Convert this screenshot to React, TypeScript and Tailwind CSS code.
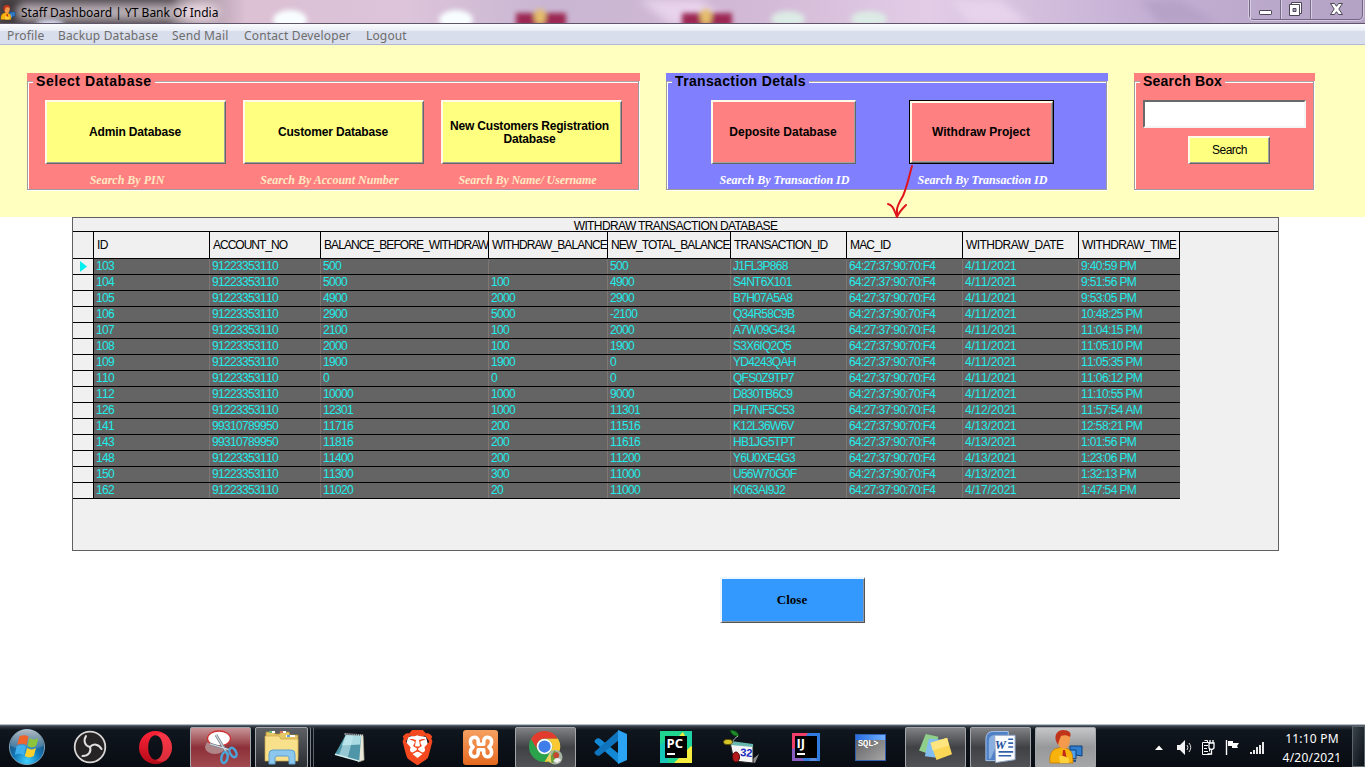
import type { ReactNode } from "react";
import { SiBrave } from "react-icons/si";

const menuItems = [
  { label: "Profile", cls: "w-[51px]" },
  { label: "Backup Database", cls: "w-[114px]" },
  { label: "Send Mail", cls: "w-[72px]" },
  { label: "Contact Developer", cls: "w-[122px]" },
  { label: "Logout", cls: "w-[60px]" },
];

const columns = [
  { name: "ID", head: "tracking-[-0.5px]", cell: "tracking-[-0.67px]" },
  { name: "ACCOUNT_NO", head: "tracking-[-1px]", cell: "tracking-[-0.67px]" },
  { name: "BALANCE_BEFORE_WITHDRAW", head: "tracking-[-0.93px]", cell: "tracking-[-0.67px]" },
  { name: "WITHDRAW_BALANCE", head: "tracking-[-0.92px]", cell: "tracking-[-0.67px]" },
  { name: "NEW_TOTAL_BALANCE", head: "tracking-[-0.96px]", cell: "tracking-[-0.67px]" },
  { name: "TRANSACTION_ID", head: "tracking-[-0.8px]", cell: "tracking-[-0.75px]" },
  { name: "MAC_ID", head: "tracking-[-0.85px]", cell: "tracking-[-0.65px]" },
  { name: "WITHDRAW_DATE", head: "tracking-[-0.55px]", cell: "tracking-[-0.2px]" },
  { name: "WITHDRAW_TIME", head: "tracking-[-0.62px]", cell: "tracking-[-0.62px]" },
];

const MAC = "64:27:37:90:70:F4";
const rows: string[][] = [
  ["103", "91223353110", "500", "", "500", "J1FL3P868", MAC, "4/11/2021", "9:40:59 PM"],
  ["104", "91223353110", "5000", "100", "4900", "S4NT6X101", MAC, "4/11/2021", "9:51:56 PM"],
  ["105", "91223353110", "4900", "2000", "2900", "B7H07A5A8", MAC, "4/11/2021", "9:53:05 PM"],
  ["106", "91223353110", "2900", "5000", "-2100", "Q34R58C9B", MAC, "4/11/2021", "10:48:25 PM"],
  ["107", "91223353110", "2100", "100", "2000", "A7W09G434", MAC, "4/11/2021", "11:04:15 PM"],
  ["108", "91223353110", "2000", "100", "1900", "S3X6IQ2Q5", MAC, "4/11/2021", "11:05:10 PM"],
  ["109", "91223353110", "1900", "1900", "0", "YD4243QAH", MAC, "4/11/2021", "11:05:35 PM"],
  ["110", "91223353110", "0", "0", "0", "QFS0Z9TP7", MAC, "4/11/2021", "11:06:12 PM"],
  ["112", "91223353110", "10000", "1000", "9000", "D830TB6C9", MAC, "4/11/2021", "11:10:55 PM"],
  ["126", "91223353110", "12301", "1000", "11301", "PH7NF5C53", MAC, "4/12/2021", "11:57:54 AM"],
  ["141", "99310789950", "11716", "200", "11516", "K12L36W6V", MAC, "4/13/2021", "12:58:21 PM"],
  ["143", "99310789950", "11816", "200", "11616", "HB1JG5TPT", MAC, "4/13/2021", "1:01:56 PM"],
  ["148", "91223353110", "11400", "200", "11200", "Y6U0XE4G3", MAC, "4/13/2021", "1:23:06 PM"],
  ["150", "91223353110", "11300", "300", "11000", "U56W70G0F", MAC, "4/13/2021", "1:32:13 PM"],
  ["162", "91223353110", "11020", "20", "11000", "K063AI9J2", MAC, "4/17/2021", "1:47:54 PM"],
];

const gridCols = "grid grid-cols-[21px_116px_111px_168px_119px_123px_116px_116px_116px_101px]";

function StaffIcon({ className }: { className: string }) {
  return (
    <svg viewBox="0 0 36 34" className={className}>
      <path d="M22 16h12v10l-12-2z" fill="#2f7fd0" stroke="#123e78" />
      <path d="M17 20h11v9l-11-2z" fill="#4aa0ee" stroke="#123e78" />
      <path d="M20 30l8 1" stroke="#1c4f8c" strokeWidth="2" />
      <path d="M2 33c-1-9 2-14 8-15l5-1 5 2c4 2 5 6 5 14z" fill="#f7b20b" stroke="#c77a05" strokeWidth=".8" />
      <path d="M15 20l2 0 2 10-3 3-2-3z" fill="#c3261b" />
      <path d="M9 9c0-5 3-8 7-8s7 3 6 8c0 6-3 10-6 10s-7-4-7-10z" fill="#f39a4c" />
      <path d="M8 11C6 4 10 0 15 0c6 0 9 3 7 7-3-2-6-2-9-1-1 3-2 4-3 9z" fill="#c0351a" />
      <path d="M11 26c4-1 6 1 10 2v5h-9z" fill="#ffd23c" />
    </svg>
  );
}

function TitleBar() {
  return (
    <header className="relative h-6 overflow-hidden border-b border-[#5f5669] bg-[#cbb8d6]">
      <svg viewBox="0 0 1365 24" preserveAspectRatio="none" className="absolute inset-0 h-6 w-full">
        <defs>
          <linearGradient id="aero" x1="0" x2="1">
            <stop offset="0" stopColor="#8d8489" />
            <stop offset=".13" stopColor="#8f858c" />
            <stop offset=".18" stopColor="#dcc0d4" />
            <stop offset=".3" stopColor="#dcc4da" />
            <stop offset=".4" stopColor="#c9b6d2" />
            <stop offset=".55" stopColor="#d2b9d5" />
            <stop offset=".68" stopColor="#e2cce6" />
            <stop offset=".84" stopColor="#c4b0d4" />
            <stop offset="1" stopColor="#b3a2c4" />
          </linearGradient>
          <filter id="soft" x="-30%" y="-60%" width="160%" height="220%"><feGaussianBlur stdDeviation="2.4" /></filter>
          <filter id="wide" x="-10%" y="-60%" width="120%" height="220%"><feGaussianBlur stdDeviation="4" /></filter>
        </defs>
        <rect width="1365" height="24" fill="url(#aero)" />
        <g filter="url(#wide)">
          <path d="M-5-5h182l-4 34H-5z" fill="#3f3a3d" />
          <rect x="18" y="5" width="200" height="14" rx="7" fill="#b9afb6" />
          <ellipse cx="198" cy="12" rx="22" ry="10" fill="#e5d3de" />
          <path d="M640 0l60 0 30 24h-60zM950 0h50l30 24h-60z" fill="#e8d3ec" />
          <path d="M1140 0h40l40 24h-60z" fill="#b5a2c6" />
        </g>
        <g filter="url(#soft)">
          <ellipse cx="290" cy="20" rx="17" ry="10" fill="#f8feff" />
          <ellipse cx="456" cy="20" rx="17" ry="10" fill="#f8feff" />
          <ellipse cx="50" cy="24" rx="14" ry="4" fill="#e2e8ff" />
          <rect x="516" y="13" width="50" height="14" fill="#9c2853" />
          <rect x="682" y="13" width="50" height="14" fill="#9c2853" />
          <ellipse cx="540" cy="17" rx="6" ry="8" fill="#e5bd6c" />
          <ellipse cx="706" cy="17" rx="6" ry="8" fill="#e5bd6c" />
          <ellipse cx="788" cy="19" rx="17" ry="8" fill="#dcebe5" />
          <ellipse cx="869" cy="19" rx="18" ry="8" fill="#dcebe5" />
        </g>
        <g fill="none">
          <path d="M1249.500-1V15q0 4.500 4.500 4.500h104q4.500 0 4.500-4.500V-1" stroke="#716684" />
          <path d="M1248.500-1V15.500q0 5 5 5h105q5 0 5-5V-1" stroke="#ddd2e6" strokeOpacity=".8" />
          <path d="M1280.500 0v19M1310.500 0v19" stroke="#776c8a" />
          <path d="M1281.500 0v19M1311.500 0v19M1250.500 0v19" stroke="#d9cde4" />
        </g>
        <rect x="1259.500" y="10.500" width="12" height="4" rx=".6" fill="#fff" stroke="#4b4658" />
        <path d="M1291.500 2.500h10v11h-10z" fill="#fff" stroke="#4b4658" />
        <path d="M1289.500 4.500h10v11h-10z" fill="#fff" stroke="#4b4658" />
        <path d="M1293 8.500h3v3h-3z" fill="#b3a2c4" stroke="#4b4658" />
        <path d="M1330.500 3.500h4l2 2.800 2-2.800h4l-3.700 5.500 3.700 5.500h-4l-2-2.800-2 2.800h-4l3.700-5.500z" fill="#fff" stroke="#4b4658" />
      </svg>
      <div className="relative flex h-6 items-center">
        <StaffIcon className="h-[15px] w-[16px]" />
        <h1 className="ml-[5px] pt-px font-['Noto_Sans',sans-serif] text-[12px] leading-6 whitespace-nowrap text-black">Staff Dashboard | YT Bank Of India</h1>
      </div>
    </header>
  );
}

function GroupBox({ title, titleClass, color, width, children }: { title: string; titleClass: string; color: string; width: string; children: ReactNode }) {
  return (
    <section className={`${width} shrink-0`}>
      <div className={`h-2 ${color}`} />
      <div className={`mr-px h-[109px] border-r border-b border-l border-[#a09a9a] shadow-[inset_1px_0_0_#fff,0_1px_0_#fff,1px_0_0_#fff] ${color}`}>
        <div className="flex h-[2px] items-start">
          <span className="h-[2px] w-[5px] border-b border-white bg-[#b0a5a5]" />
          <h2 className={`-mt-2 px-[3px] font-['Liberation_Sans',sans-serif] text-[14px] leading-4 font-bold whitespace-nowrap text-black ${titleClass}`}>{title}</h2>
          <span className="h-[2px] flex-1 border-b border-white bg-[#b0a5a5]" />
        </div>
        {children}
      </div>
    </section>
  );
}

function BevelButton({ children, size, color, className = "" }: { children: ReactNode; size: string; color: string; className?: string }) {
  return (
    <button className={`flex shrink-0 items-center justify-center border-t-2 border-l-2 border-r border-b border-t-[#fffbe8] border-l-[#fffbe8] border-r-[#666] border-b-[#666] text-center font-['Liberation_Sans',sans-serif] text-[12px] leading-[13px] text-black shadow-[inset_-1px_-1px_0_#a0a0a0] ${size} ${color} ${className}`}>
      {children}
    </button>
  );
}

function Hint({ children, className }: { children: ReactNode; className: string }) {
  return <p className={`pt-2 text-center font-['Liberation_Serif',serif] text-[12px] leading-4 font-bold italic whitespace-nowrap ${className}`}>{children}</p>;
}

function TransactionGrid() {
  return (
    <div className="ml-[72px] h-[334px] w-[1207px] border border-[#606060] bg-[#f0f0f0] font-['Liberation_Sans',sans-serif] text-[12px]">
      <div className="h-[14px] border-b border-black text-center leading-[16px] tracking-[-0.62px] text-black">WITHDRAW TRANSACTION DATABASE</div>
      <div className={`${gridCols} h-[27px] w-[1107px] border-b border-black`}>
        <span className="border-r border-black" />
        {columns.map((c) => (
          <span key={c.name} className={`overflow-hidden border-r border-black pl-[3px] leading-[26px] whitespace-nowrap text-black ${c.head}`}>{c.name}</span>
        ))}
      </div>
      {rows.map((row, i) => (
        <div key={row[0]} className={`${gridCols} h-4 w-[1107px] border-b border-black bg-[#646464] text-[#1eeeea] [font-kerning:none]`}>
          <span className="flex items-center border-r border-black bg-[#f0f0f0] pl-[7px]">
            {i === 0 && <svg viewBox="0 0 7 11" className="h-[11px] w-[7px]"><path d="M0 0l7 5.500-7 5.500z" fill="#00f0f0" /></svg>}
          </span>
          {row.map((cell, j) => (
            <span key={j} className={`overflow-hidden border-r border-[#7d7672] pl-[2px] leading-[15px] whitespace-nowrap last:border-[#646464] ${columns[j].cell}`}>{cell}</span>
          ))}
        </div>
      ))}
    </div>
  );
}

function StartOrb() {
  return (
    <svg viewBox="0 0 40 40" className="h-[38px] w-[38px]">
      <defs>
        <radialGradient id="orb" cx=".5" cy=".9" r=".85"><stop offset="0" stopColor="#3fd0ff" /><stop offset=".45" stopColor="#1377b8" /><stop offset="1" stopColor="#24415c" /></radialGradient>
        <linearGradient id="orbShine" x2="0" y2="1"><stop offset="0" stopColor="#fff" stopOpacity=".65" /><stop offset="1" stopColor="#fff" stopOpacity=".1" /></linearGradient>
      </defs>
      <circle cx="20" cy="20" r="18.500" fill="url(#orb)" stroke="#7fa5bd" />
      <path d="M2.500 19a17.500 17.500 0 0 1 35 0c-10 5-25 5-35 0z" fill="url(#orbShine)" />
      <path d="M12 9c3.500-2 6.500-2 9.500 0l-2 9c-3.500-2-6.500-2-10 0z" fill="#f0642c" />
      <path d="M22.500 10.500c3.500 2 6.500 2 9.500 0l-2.300 8.500c-3.400 2-6.200 2-9.200 0z" fill="#8cc53c" />
      <path d="M9 19.500c3.500-2 6.500-2 10 0l-2.300 9c-3.500-2-6.500-2-9.500 0z" fill="#3fb0ee" />
      <path d="M20 21c3.500 2 6.500 2 9.500 0l-2.300 8.500c-3.400 2-6.500 2-9.500 0z" fill="#fdd02e" />
    </svg>
  );
}

function ObsIcon() {
  return (
    <svg viewBox="0 0 34 34" className="mr-px h-[34px] w-[34px]">
      <circle cx="17" cy="17" r="15.300" fill="#262324" stroke="#d9d6d6" strokeWidth="1.800" />
      <g fill="none" stroke="#e2dfdf" strokeWidth="2" strokeLinecap="round">
        <path d="M13 6c-3 5-1 10 4 11" />
        <path d="M13 6c-3 5-1 10 4 11" transform="rotate(120 17 17)" />
        <path d="M13 6c-3 5-1 10 4 11" transform="rotate(240 17 17)" />
      </g>
    </svg>
  );
}

function OperaIcon() {
  return (
    <svg viewBox="0 0 36 36" className="h-[35px] w-[35px]">
      <defs><linearGradient id="opera" x2="0" y2="1"><stop offset="0" stopColor="#ff2438" /><stop offset="1" stopColor="#b40a18" /></linearGradient></defs>
      <path fillRule="evenodd" d="M18 1a17 17 0 1 0 0 34 17 17 0 0 0 0-34zm0 4.500c4.500 0 7.500 5.600 7.500 12.500S22.500 30.500 18 30.500 10.500 24.900 10.500 18 13.500 5.500 18 5.500z" fill="url(#opera)" />
      <path d="M18 5.500C21 3.500 25 3 29 5c8 7 8 19 0 26-4 2-8 1.500-11-.5 4.500 0 7.500-5.600 7.500-12.500S22.500 5.500 18 5.500z" fill="#ff5560" opacity=".45" />
    </svg>
  );
}

function SnipIcon() {
  return (
    <svg viewBox="0 0 38 36" className="h-[36px] w-[38px]">
      <ellipse cx="13" cy="18" rx="10" ry="7" fill="#b79a9a" opacity=".8" />
      <ellipse cx="17" cy="9.500" rx="11.500" ry="7.500" fill="#fff" stroke="#cf3030" strokeWidth="1.300" />
      <path d="M14 6L26 26M8 15l20 6" stroke="#7d8792" strokeWidth="2.800" />
      <path d="M14 6L26 26M8 15l20 6" stroke="#d3dae0" strokeWidth="1.200" />
      <ellipse cx="22.500" cy="28.500" rx="3" ry="5.500" transform="rotate(12 22.500 28.500)" fill="none" stroke="#4aa5d8" strokeWidth="2.500" />
      <ellipse cx="31" cy="23.500" rx="3" ry="5" transform="rotate(-28 31 23.500)" fill="none" stroke="#4aa5d8" strokeWidth="2.500" />
    </svg>
  );
}

function FolderIcon() {
  return (
    <svg viewBox="0 0 38 36" className="h-[36px] w-[38px]">
      <path d="M3 8V3h9v2h5V3h9l1 3h8v22H3z" fill="#e6c765" stroke="#b58f35" strokeWidth=".7" />
      <path d="M6 3h6M17 3h6M23 7h9" stroke="#fff" strokeWidth="2" />
      <path d="M24 7h3" stroke="#2f7fd0" strokeWidth="1.500" /><path d="M17 3h3" stroke="#c4402e" strokeWidth="1.500" /><path d="M6 3h3" stroke="#3a9e4a" strokeWidth="1.500" />
      <path d="M2 7h14l2 3h17v22H2z" fill="#f9e08a" stroke="#c9a548" strokeWidth=".7" />
      <path d="M6 35V25q0-4 4-4h18q4 0 4 4v10h-6v-6q0-2-2-2H14q-2 0-2 2v6z" fill="#8cc8ee" stroke="#5e9fce" />
    </svg>
  );
}

function NotepadIcon() {
  return (
    <svg viewBox="0 0 36 34" className="h-[33px] w-[35px]">
      <path d="M28 4l3 1 1 25-6 2z" fill="#e9e7d8" stroke="#aaa894" strokeWidth=".7" />
      <path d="M13 4l16 1-2 26L2 24z" fill="#4f97a8" />
      <path d="M13 4l16 1-1 9-19 1z" fill="#a9dbe2" /><path d="M14 4l7 1-6 23-9-3z" fill="#c4eaee" opacity=".6" />
      <path d="M2 24l25 7" stroke="#d7f1f3" strokeWidth="1.500" />
      <path d="M12 3l19 1.500" stroke="#d8d8d8" strokeWidth="2" strokeDasharray="1 1" />
    </svg>
  );
}

function BraveIcon() {
  return (
    <span className="grid h-[36px] w-[32px] place-items-center">
      <svg viewBox="0 0 32 36" className="col-start-1 row-start-1 h-[36px] w-[32px]"><path d="M7 8l9-2 9 2 2 8-4 10-7 6-7-6-4-10z" fill="#fff" /></svg>
      <SiBrave className="col-start-1 row-start-1 h-[35px] w-[35px] text-[#f4491f]" />
    </span>
  );
}

function XamppIcon() {
  return (
    <span className="grid h-[35px] w-[35px] place-items-center rounded-[3px] bg-gradient-to-b from-[#f5a060] to-[#e5691c]">
      <svg viewBox="0 0 30 26" className="h-[24px] w-[28px]" fill="none" stroke="#fff" strokeWidth="3.800" strokeLinejoin="round">
        <path d="M12 10V6.500C12 1 3.500 1 3.500 7c0 3 1 4.500 3 6-2 1.500-3 3-3 6 0 6 8.500 6 8.500.5V16h6v3.500c0 5.500 8.500 5.500 8.500-.5 0-3-1-4.500-3-6 2-1.500 3-3 3-6 0-6-8.500-6-8.500-.5V10z" />
      </svg>
    </span>
  );
}

function ChromeIcon() {
  return (
    <svg viewBox="0 0 36 36" className="h-[35px] w-[35px]">
      <circle cx="17" cy="17" r="16" fill="#2ba24c" />
      <path d="M3.100 9A16 16 0 0 1 30.900 9L17 9a8 8 0 0 0-7 12z" fill="#e33b2e" />
      <path d="M30.900 9A16 16 0 0 1 17 33l7-12a8 8 0 0 0-7-12z" fill="#fcc934" />
      <circle cx="17" cy="17" r="8" fill="#fff" /><circle cx="17" cy="17" r="6.300" fill="#3f7de8" />
      <circle cx="28" cy="28" r="7.500" fill="#a8b4a4" /><path d="M20 33l7-12 4 3-5 10z" fill="#6aa13c" />
      <circle cx="29" cy="26" r="3" fill="#c4472f" /><path d="M19 31l4-8 1 11z" fill="#e9d65a" /><path d="M26 32c2-4 6-4 8-1l-4 3z" fill="#eee" />
    </svg>
  );
}

function CodeIcon() {
  return (
    <svg viewBox="0 0 36 36" className="h-[36px] w-[36px]">
      <path d="M26 35L2 13.500q-1-1.500 0-2.500l2-1.500q1.500-.8 3 .3L26 25z" fill="#1389d6" />
      <path d="M26 1L2 22.500q-1 1.500 0 2.500l2 1.500q1.500.8 3-.3L26 11z" fill="#0f74bd" />
      <path d="M25 1l9 4v26l-9 4z" fill="#2aa4f2" />
    </svg>
  );
}

function LetterIcon({ text, frame }: { text: string; frame: ReactNode }) {
  return (
    <span className="grid place-items-center">
      <span className="col-start-1 row-start-1 flex">{frame}</span>
      <span className="col-start-1 row-start-1 flex h-[22px] w-[22px] flex-col items-start bg-black pl-[2px] font-['Open_Sans',sans-serif] text-[13px] leading-[14px] font-bold text-white">
        {text}
        <span className="mt-[3px] h-[2px] w-[8px] bg-white" />
      </span>
    </span>
  );
}

function CalendarBugIcon() {
  return (
    <svg viewBox="0 0 36 36" className="h-[36px] w-[36px]">
      <path d="M26 33l10-8-4 9z" fill="#8b8b8b" />
      <path d="M7 13l23 3v18l-19-2z" fill="#f5f5f5" stroke="#222" />
      <path d="M8 12l22 3v3L8 16z" fill="#68b7ae" />
      <path d="M7 1c5 0 8 2 9 6-5 1-8-2-9-6z" fill="#1e8b2b" stroke="#0b3d10" />
      <path d="M15 7c-3 2-6 5-6 8" fill="none" stroke="#bcbcbc" />
      <ellipse cx="5" cy="13" rx="4.500" ry="2.600" fill="#d5c526" stroke="#5a5207" />
      <ellipse cx="13" cy="28" rx="3.500" ry="5" fill="#b51a1a" stroke="#510808" />
      <text x="17" y="27" fill="#1b2bc2" fontSize="11" fontWeight="700" fontFamily="Liberation Sans" transform="rotate(4 17 27)">32</text>
    </svg>
  );
}

function SqlIcon() {
  return (
    <span className="flex h-[27px] w-[31px] flex-col border border-[#315fae] bg-gradient-to-br from-[#5c5c60] to-[#a7a7a7]">
      <span className="h-[5px] bg-gradient-to-r from-[#2a6ce0] to-[#6fb0ff]" />
      <span className="pl-[2px] font-['Liberation_Mono',monospace] text-[8.5px] leading-[9px] text-white [text-shadow:0_0_0.5px_#fff]">SQL&gt;</span>
    </span>
  );
}

function StickyIcon() {
  return (
    <svg viewBox="0 0 36 32" className="h-[31px] w-[35px]">
      <path d="M8 2l13 3-6 19L1 19z" fill="#90cf8b" />
      <path d="M11 7l16 1-4 19-16-2z" fill="#82bdf0" />
      <path d="M13 11l17-5 5 17-16 6z" fill="#fbd757" />
      <path d="M13 11l17-5 2 8-17 5z" fill="#ffe88a" opacity=".8" />
    </svg>
  );
}

function WordIcon() {
  return (
    <svg viewBox="0 0 36 34" className="h-[34px] w-[35px]">
      <path d="M3 31V9q0-8 8-8h15v30z" fill="#4f80c6" stroke="#a8c5ee" />
      <path d="M6 29V11q0-6 6-6h6L8 29z" fill="#89afe0" />
      <path d="M12 5h21v25l-20 3z" fill="#f9fbff" stroke="#94a8c8" />
      <text x="12" y="19" fill="#234f9b" fontSize="13" fontWeight="700" fontFamily="Liberation Serif" fontStyle="italic">W</text>
      <path d="M26 9h5M26 13h5M26 17h5M16 22h15M16 26h13" stroke="#315fa8" strokeWidth="1.700" />
    </svg>
  );
}

const pycharmFrame = (
  <svg viewBox="0 0 32 32" className="h-[32px] w-[32px]"><path d="M0 0h32v32H0z" fill="#1fd590" /><path d="M14 32L32 14v18zM18 6l5-5 4 8z" fill="#f5ee3e" /><path d="M0 14l8-6v24H0z" fill="#16c6b8" /><path d="M24 0h8v16l-6-8z" fill="#1fd3a6" /></svg>
);
const ideaFrame = (
  <svg viewBox="0 0 28 28" className="h-[28px] w-[28px]"><path d="M0 0h28v28H0z" fill="#2f7be0" /><path d="M0 0h16L4 18 0 16z" fill="#f0406a" /><path d="M0 16l5-2 7 14H0z" fill="#8a5cc0" /><path d="M17 28l5-8 3 8z" fill="#5a8ae0" /></svg>
);

const plainSlot = "flex h-full w-[65px] shrink-0 items-center justify-center pt-px";
const buttonBase = "flex h-[41px] w-[61px] items-center justify-center rounded-[2px] border border-[#a2a6aa] bg-gradient-to-b";

function Slot({ children, tone }: { children: ReactNode; tone?: string }) {
  return <div className={plainSlot}>{tone ? <div className={`${buttonBase} ${tone}`}>{children}</div> : children}</div>;
}

const grayTone = "from-[#808285] via-[#3f4144] to-[#515356]";

function Taskbar() {
  return (
    <footer className="flex h-[42px] border-t border-[#55606b] bg-[#0b1017] bg-gradient-to-b from-[#39414a] from-0% via-[#10161e] via-10% to-[#080c12] to-100% shadow-[0_-1px_0_#b4bcc4]">
      <div className="flex w-[58px] shrink-0 items-center pl-2"><StartOrb /></div>
      <Slot><ObsIcon /></Slot>
      <Slot><OperaIcon /></Slot>
      <Slot tone="from-[#c79599] via-[#8d3039] to-[#a24a50]"><SnipIcon /></Slot>
      <div className="flex h-full w-[65px] shrink-0 items-center pt-px pl-[2px]">
        <div className="flex h-[41px] w-[53px] items-center justify-center rounded-[2px] border border-[#a2a6aa] bg-gradient-to-b from-[#5d6166] to-[#2a2e33]"><FolderIcon /></div>
        <span className="h-[41px] w-[3px] rounded-r-[2px] border-r border-[#7c8288]" />
        <span className="h-[41px] w-[3px] rounded-r-[2px] border-r border-[#5c6268]" />
      </div>
      <Slot><NotepadIcon /></Slot>
      <Slot><BraveIcon /></Slot>
      <Slot><XamppIcon /></Slot>
      <Slot tone={grayTone}><ChromeIcon /></Slot>
      <Slot><CodeIcon /></Slot>
      <Slot><LetterIcon text="PC" frame={pycharmFrame} /></Slot>
      <Slot><CalendarBugIcon /></Slot>
      <Slot><LetterIcon text="IJ" frame={ideaFrame} /></Slot>
      <Slot><SqlIcon /></Slot>
      <Slot tone={grayTone}><StickyIcon /></Slot>
      <Slot tone={grayTone}><WordIcon /></Slot>
      <Slot tone="from-[#c5c6c8] via-[#96989a] to-[#a5a7a9]"><StaffIcon className="h-[34px] w-[36px]" /></Slot>
      <svg viewBox="0 0 112 20" className="mt-[11px] ml-[55px] h-[20px] w-[112px] shrink-0">
        <path d="M2 13l4-4.500 4 4.500z" fill="#fff" />
        <path d="M24 8h3l5-5v15l-5-5h-3z" fill="#f2f2f2" />
        <path d="M34 8q2 2.500 0 5M36 6q3.500 4.500 0 9" fill="none" stroke="#ddd" />
        <path d="M49.500 5.500h7v12h-7zM51.500 3.500h3v2M51 8.500h4M51 11.500h3M51 14.500h4" fill="none" stroke="#fff" />
        <path d="M56 6h5v5q-2.500 3-5 0zM57 3v3M60 3v3M58.500 12v5h-4" fill="#0b1017" stroke="#fff" strokeWidth="1.300" />
        <path d="M73.500 3v15" stroke="#fff" strokeWidth="1.400" /><path d="M75 4h5v2h6l-2 3 1 2h-6V9h-4z" fill="#fff" />
        <path d="M98 15v2M101 13v4M104 10v7M107 8v9M110 5v12" stroke="#fff" strokeWidth="1.800" />
      </svg>
      <div className="ml-[11px] flex w-[72px] shrink-0 flex-col items-center pt-[3px] font-['Noto_Sans',sans-serif] text-[12px] leading-[19px] tracking-[0.2px] whitespace-nowrap text-white">
        <span>11:10 PM</span>
        <span>4/20/2021</span>
      </div>
      <span className="ml-auto h-full w-[13px] border border-[#5b636b] bg-gradient-to-br from-[#3a434b] to-[#0c1117]" />
    </footer>
  );
}

export default function App() {
  return (
    <div className="relative flex h-[767px] w-[1365px] flex-col overflow-hidden bg-white">
      <TitleBar />
      <nav className="flex h-[21px] shrink-0 border-b border-[#b3b9d3] bg-gradient-to-b from-[#fbfcfe] from-0% via-[#e9edf5] via-35% to-[#d9deec] to-36% pl-[7px] font-['Noto_Sans',sans-serif] text-[12px] leading-[24px] tracking-[0.15px] text-[#6d6d6d]">
        {menuItems.map((m) => <span key={m.label} className={`${m.cls} shrink-0 whitespace-nowrap`}>{m.label}</span>)}
      </nav>
      <main className="flex flex-1 flex-col">
        <div className="flex h-[172px] shrink-0 gap-[26px] bg-[#ffffc0] pt-7 pl-[27px]">
          <GroupBox title="Select Database" titleClass="tracking-[0.55px]" color="bg-[#ff8080]" width="w-[613px]">
            <div className="mt-[17px] ml-[17px] flex gap-[17px]">
              <div><BevelButton size="h-16 w-[181px]" color="bg-[#ffff80]" className="pr-[2px] font-bold tracking-[-0.15px]">Admin Database</BevelButton><Hint className="pr-[17px] text-[#ffe9c4]">Search By PIN</Hint></div>
              <div><BevelButton size="h-16 w-[181px]" color="bg-[#ffff80]" className="pr-[2px] font-bold tracking-[-0.15px]">Customer Database</BevelButton><Hint className="pr-2 text-[#ffe9c4]">Search By Account Number</Hint></div>
              <div><BevelButton size="h-16 w-[181px]" color="bg-[#ffff80]" className="pr-[5px] font-bold tracking-[-0.2px]">New Customers Registration<br />Database</BevelButton><Hint className="pr-2 tracking-[-0.1px] text-[#ffe9c4]">Search By Name/ Username</Hint></div>
            </div>
          </GroupBox>
          <GroupBox title="Transaction Detals" titleClass="tracking-[0.35px]" color="bg-[#8080ff]" width="w-[442px]">
            <div className="mt-[17px] ml-[44px] flex gap-[53px]">
              <div><BevelButton size="h-16 w-[145px]" color="bg-[#ff8080]" className="pr-[2px] font-bold">Deposite Database</BevelButton><Hint className="pl-[2px] text-white">Search By Transaction ID</Hint></div>
              <div><div className="border border-black"><BevelButton size="h-[62px] w-[143px]" color="bg-[#ff8080]" className="pr-[2px] font-bold">Withdraw Project</BevelButton></div><Hint className="pl-[2px] text-white">Search By Transaction ID</Hint></div>
            </div>
          </GroupBox>
          <GroupBox title="Search Box" titleClass="tracking-[0.2px]" color="bg-[#ff8080]" width="w-[181px]">
            <div className="mt-[17px] ml-[8px] flex w-[163px] flex-col items-center gap-2">
              <input aria-label="Search" className="h-7 w-[163px] border-2 border-t-[#696969] border-r-[#f4f4f4] border-b-[#f4f4f4] border-l-[#696969] bg-white px-1 outline-none" />
              <BevelButton size="h-7 w-[82px]" color="bg-[#ffff80]" className="ml-[9px] tracking-[-0.5px]">Search</BevelButton>
            </div>
          </GroupBox>
        </div>
        <TransactionGrid />
        <button className="mt-[26px] ml-[720px] h-[46px] w-[145px] border-t-2 border-l-2 border-r border-b border-t-[#eef6ff] border-l-[#eef6ff] border-r-[#555] border-b-[#555] bg-[#3399ff] pr-[2px] pb-[2px] font-['Liberation_Serif',serif] text-[13px] font-bold text-black shadow-[inset_-1px_-1px_0_#8a9aaa]">Close</button>
      </main>
      <Taskbar />
      <svg viewBox="0 0 30 55" className="absolute top-[164px] left-[886px] h-[55px] w-[30px]" fill="none" stroke="#e0141c" strokeWidth="2" strokeLinecap="round" strokeLinejoin="round">
        <path d="M26 2C23 12 22 20 17 32c-3 5-5 8-6 13M2 40c5 1 6 6 9 13 2-5 5-8 9-12M11 45v8" />
      </svg>
    </div>
  );
}
